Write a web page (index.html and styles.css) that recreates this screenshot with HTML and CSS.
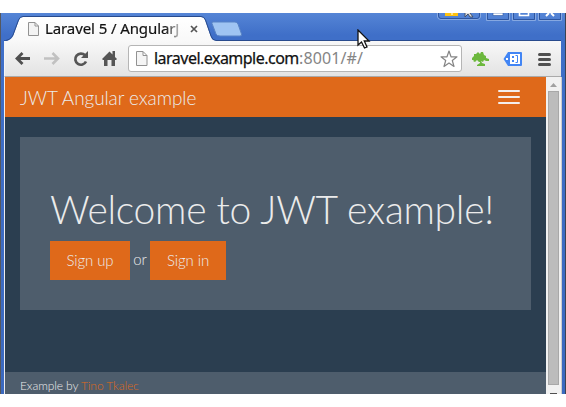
FILE: index.html
```html
<!DOCTYPE html>
<html lang="en">
<head>
<meta charset="utf-8">
<title>Laravel 5 / AngularJS</title>
<link rel="stylesheet" href="styles.css">
</head>
<body>
<div class="window">
  <header class="tabstrip">
    <svg class="tab-art" width="566" height="28" viewBox="0 13 566 28">
      <defs>
        <linearGradient id="tab" x1="0" y1="0" x2="0" y2="1"><stop offset="0" stop-color="#fff"/><stop offset="1" stop-color="#f8f8f8"/></linearGradient>
      </defs>
      <path d="M4 41.5C8 41 11 40 13 36L19 20Q20 17 23 17H201Q204 17 205 20L211 37Q212 40.500 216 40.500H559Q561 40.500 561 42H4Z" fill="url(#tab)"/>
      <path d="M4 41C8 40 11 39 13 35L18.500 20Q20 16.500 23 16.500H201Q204 16.500 205.500 20L211 36Q212.500 40.500 216 40.500H561" fill="none" stroke="#294b8d"/>
      <path d="M213 22H235Q237 22 238 24L241.500 34Q242 36 240 36H220Q217 36 216 34L212 23.500Q211.500 22 213 22Z" fill="#9fc4f2" stroke="#5883c5"/>
      <g fill="none" stroke="#86a8e1">
        <path d="M437.500 13V17Q438 19.500 441 19.500H477Q480 19.500 480.500 17V13M486.500 13V20.500H509.500V13M512.500 13V20.500H535.500V13M538.500 13V20.500H561.500V13"/>
      </g>
      <g fill="none" stroke="#2d55a0">
        <path d="M438.500 13V16Q439 18.500 441 18.500H477Q479 18.500 479.500 16V13M487.500 13V19.500H508.500V13M513.500 13V19.500H534.500V13M539.500 13V19.500H560.500V13"/>
      </g>
      <path d="M445 13H458V16H445Z" fill="#ffc20e"/><path d="M451 14h2" stroke="#fff"/>
      <path d="M465 13V17L468 14L470 17H473L470 13" fill="#ddd" stroke="#43516b"/>
      <path d="M493 13H503V15.500H493Z" fill="#fff" stroke="#2d55a0" stroke-width=".6"/>
      <path d="M519.500 13V15.500H528.500V13" fill="none" stroke="#fff" stroke-width="1.600"/>
      <path d="M546 16L549 13M554 16L551 13" stroke="#fff" stroke-width="2"/>
    </svg>
    <div class="tab">
      <svg width="12" height="14" viewBox="0 0 12 14"><path d="M.5.5H7L10.500 4V13.500H.5ZM7 .5V4H10.500" fill="#f3f3f3" stroke="#929292"/></svg>
      <span class="tab-title">Laravel 5 / AngularJ</span>
      <svg class="close" width="8" height="8" viewBox="0 0 8 8"><path d="M1 1L7 7M7 1L1 7" stroke="#555" stroke-width="1.700"/></svg>
    </div>
  </header>
  <nav class="toolbar">
    <svg class="navicons" width="110" height="20" viewBox="10 48 110 20" fill="none">
      <path d="M30 58.500H17M22.500 53L17 58.500L22.500 64" stroke="#4f4f4f" stroke-width="2.800"/>
      <path d="M44 58.500H57M52.500 53L58 58.500L52.500 64" stroke="#c1c1c1" stroke-width="2.600"/>
      <path d="M85 55.300A5.600 5.600 0 1 0 86 61.500" stroke="#555" stroke-width="2.700"/><path d="M88 51V58H81Z" fill="#555"/>
      <path d="M102 59L109.500 51.500L112.500 54.500V51H115V57L117 59L116 60H115V66H111.500V60H107.500V66H104V60H103Z" fill="#555"/>
    </svg>
    <div class="address">
      <svg width="12" height="15" viewBox="0 0 12 15"><path d="M.5.500H7L11 4.500V14.500H.5ZM7 .5V4.500H11" fill="#f5f5f5" stroke="#929292"/></svg>
      <span class="url"><span class="host">laravel.example.com</span><span class="path">:8001/#/</span></span>
      <svg class="star" width="18" height="18" viewBox="0 0 18 18"><path d="M9 1L11 6.800H17L12.300 10.500L14 16.500L9 13L4 16.500L5.700 10.500L1 6.800H7Z" fill="#fff" stroke="#858585" stroke-width="1.200" stroke-linejoin="round"/></svg>
    </div>
    <svg class="extensions" width="90" height="20" viewBox="468 48 90 20">
      <path d="M472 57L474 55V53H476L478 51L480 53L481 51H483L484 54L486 55V57L489 58V60H486L484 59L483 61L481 60L482 62L485 63V65H477V64L480 62L477 59L475 61L473 60L474 59H472Z" fill="#6cb83d"/>
      <path d="M478 61H480V62H478Z" fill="#eee"/>
      <path d="M503.500 58L508 51H521Q522 51 522 52V64Q522 65 521 65H508Z" fill="#4285f4"/>
      <path d="M510 53H520V63H510Z" fill="#fff"/><path d="M512 55h2v2h-2zM512 59h2v2h-2z" fill="#4285f4"/><path d="M515.500 54.500H517.500V61.500H515.500" stroke="#4285f4" fill="none"/><path d="M506 57h2v2h-2z" fill="#fff"/>
      <path d="M539.500 53.500H549.500M539.500 58.500H549.500M539.500 63.500H549.500" stroke="#505050" stroke-width="3" stroke-linecap="round"/>
    </svg>
  </nav>
  <div class="viewport">
    <main class="page">
      <div class="navbar"><span class="brand">JWT Angular example</span><span class="burger"><i></i><i></i><i></i></span></div>
      <section class="jumbotron">
        <h1>Welcome to JWT example!</h1>
        <div class="actions"><a class="btn signup">Sign up</a><span class="or">or</span><a class="btn signin">Sign in</a></div>
      </section>
      <footer><span class="credit">Example by <a>Tino Tkalec</a></span></footer>
    </main>
    <div class="scrollbar">
      <svg width="15" height="14" viewBox="0 0 15 14"><path d="M4 10L7.500 6L11 10Z" fill="#a0a0a0"/></svg>
      <div class="thumb"></div>
      <div class="arrow-down"></div>
    </div>
  </div>
  <svg class="cursor" width="14" height="21" viewBox="0 0 14 21"><path d="M1 1V16L4.500 13L7.500 19L10 18L7.300 12H12Z" fill="#fff" stroke="#111" stroke-width="1.300"/></svg>
</div>
</body>
</html>
```
FILE: styles.css
```css
* { box-sizing: border-box; }
body { margin: 0; background: #fff; overflow: hidden; }
svg { display: block; flex: none; }
.window {
  position: relative;
  width: 566px;
  height: 381px;
  margin-top: 13px;
  padding: 0 4px 0 3px;
  overflow: hidden;
  border-left: 1px solid #55585f;
  border-right: 1px solid #3a4353;
  background: linear-gradient(#5585d6 0, #3f6fc8 22px, #3b69bf 100%);
}
.tabstrip { height: 28px; }
.tab-art { position: absolute; left: -1px; top: 0; }
.tab { position: relative; display: flex; width: 199px; height: 28px; padding: 9px 0 0 24px; }
.tab-title {
  width: 136px;
  margin: -4px 0 0 5px;
  font: 15px/20px "Noto Sans", sans-serif;
  letter-spacing: -.1px;
  white-space: nowrap;
  background: linear-gradient(90deg, #111 88%, #ccc 100%);
  background-clip: text;
  color: transparent;
  -webkit-text-stroke: .2px transparent;
}
.close { margin: 3px 0 0 9px; }
.toolbar {
  position: relative;
  display: flex;
  align-items: center;
  width: 557px;
  height: 36px;
  padding-left: 5px;
  border-bottom: 1px solid #aaa;
  border-left: 1px solid #f5f5f5;
  background: linear-gradient(#f8f8f8, #e3e3e3);
}
.navicons { margin-top: -1px; }
.address {
  display: flex;
  align-items: center;
  width: 334px;
  height: 27px;
  margin: 0 0 0 8px;
  padding: 0 3px 0 7px;
  border: 1px solid #b5b5b5;
  border-radius: 3px;
  background: #fff;
}
.url { display: flex; margin: -2px 0 0 6px; font: 16px/22px "Noto Sans", sans-serif; white-space: nowrap; }
.host { width: 145px; color: #111; letter-spacing: -.52px; -webkit-text-stroke: .25px #111; }
.path { width: 66px; color: #858585; letter-spacing: .1px; }
.star { margin-left: auto; }
.extensions { margin-left: 6px; }
.viewport { display: flex; width: 558px; height: 317px; border-left: 1px solid #eee; }
.page {
  display: flex;
  flex: none;
  flex-direction: column;
  width: 541px;
  background: #2b3e50;
  color: #ebebeb;
  font-family: Lato, sans-serif;
  font-weight: 300;
}
.navbar { display: flex; flex: none; justify-content: space-between; height: 40px; padding: 0 26px 0 15px; background: #df691a; }
.brand { font-size: 19px; line-height: 42px; letter-spacing: -.08px; }
.burger { display: grid; align-content: start; gap: 4px; width: 22px; padding-top: 13px; }
.burger i { height: 2px; background: #f4eeeb; border-radius: 1px; }
.jumbotron { flex: none; height: 173px; margin: 20px 15px 0; padding: 47px 30px; background: #4e5d6c; }
h1 { margin: 0; font-size: 39px; line-height: 50px; font-weight: 300; letter-spacing: -.27px; white-space: nowrap; }
.actions { display: flex; margin-top: 7px; font-size: 15px; }
.btn { height: 39px; background: #df691a; line-height: 39px; text-align: center; }
.signup { width: 80px; letter-spacing: -.1px; }
.signin { width: 76px; letter-spacing: -.1px; }
.or { width: 20px; line-height: 36px; text-align: center; }
footer { height: 22px; margin-top: auto; padding-left: 15px; background: #4e5d6c; font-size: 12px; line-height: 28px; letter-spacing: -.09px; overflow: hidden; }
footer a { color: #df691a; }
.scrollbar { display: flex; flex: none; flex-direction: column; align-items: center; width: 16px; background: #f1f1f1; border-right: 1px solid #ccc; }
.thumb { width: 11px; height: 294px; border: 1px solid #a8a8a8; background: #bcbcbc; }
.arrow-down { width: 7px; height: 1px; margin-top: 8px; background: #505050; }
.cursor { position: absolute; left: 356px; top: 16px; }
```
